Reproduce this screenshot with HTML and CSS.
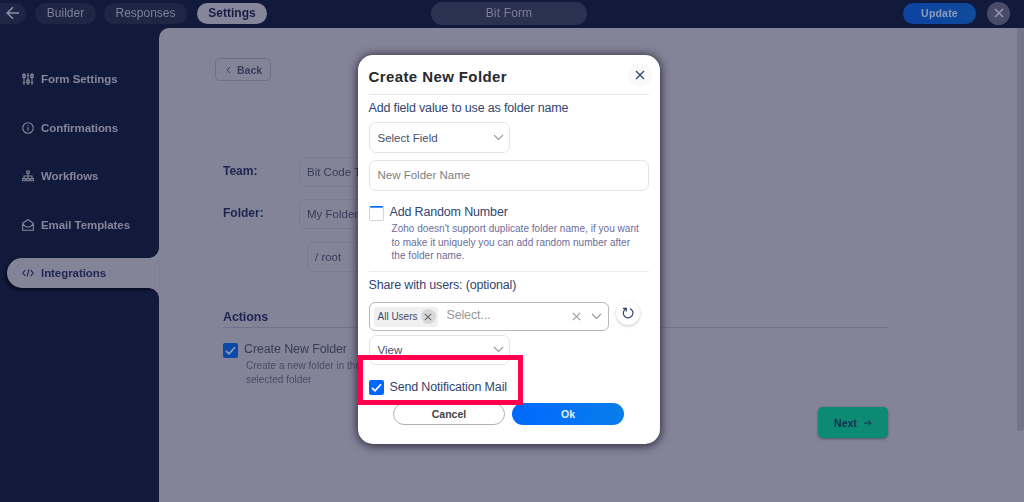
FILE: index.html
```html
<!DOCTYPE html>
<html lang="en">
<head>
<meta charset="utf-8">
<title>Bit Form</title>
<link rel="stylesheet" href="styles.css">
</head>
<body>
<div class="app">
  <header class="topbar">
    <div class="top-left">
      <span class="back-arrow"><svg width="14" height="14" viewBox="0 0 14 14"><path d="M13 7H1.5M7 1.2 1.2 7 7 12.8"/></svg></span>
      <span class="tab tab-builder">Builder</span>
      <span class="tab tab-responses">Responses</span>
      <span class="tab tab-settings">Settings</span>
    </div>
    <div class="form-name">Bit Form</div>
    <div class="top-right">
      <span class="update">Update</span>
      <span class="close-app"><svg width="10" height="10" viewBox="0 0 10 10"><path d="M1 1l8 8M9 1 1 9"/></svg></span>
    </div>
  </header>
  <div class="workspace">
    <nav class="sidebar">
      <a class="nav-item"><svg width="12" height="12" viewBox="0 0 12 12"><path d="M2 0v12M6 0v12M10 0v12"/><rect x=".8" y="1.5" width="2.4" height="3"/><rect x="4.8" y="7" width="2.4" height="3"/><rect x="8.8" y="1.5" width="2.4" height="3"/><path d="M.8 9.5h2.4M4.8 2.5h2.4M8.8 9.5h2.4"/></svg><span>Form Settings</span></a>
      <a class="nav-item"><svg width="12" height="12" viewBox="0 0 12 12"><circle cx="6" cy="6" r="5.3"/><path d="M6 5.3v3.5M6 3.2v1.1"/></svg><span>Confirmations</span></a>
      <a class="nav-item"><svg width="12" height="12" viewBox="0 0 12 12"><path d="M4.8 1h2.4v2.2H4.8zM6 3.2V8M2 8.5V6h8v2.5M.7 8.5h2.6v2.3H.7zM4.7 8.5h2.6v2.3H4.7zM8.7 8.5h2.6v2.3H8.7z"/></svg><span>Workflows</span></a>
      <a class="nav-item"><svg width="12" height="12" viewBox="0 0 12 12"><path d="M.6 4.3 6 .7l5.4 3.6v7H.6zM.8 5.2 4 8h4l3.2-2.8"/></svg><span>Email Templates</span></a>
      <a class="nav-item active"><svg width="12" height="12" viewBox="0 0 12 12"><path d="M3.2 3.2.8 6l2.4 2.8M8.8 3.2 11.2 6 8.8 8.8M7 2.5l-2 7"/></svg><span>Integrations</span></a>
    </nav>
    <main class="panel">
      <span class="back"><svg width="5" height="8" viewBox="0 0 5 8"><path d="M4 1 1.2 4 4 7"/></svg>Back</span>
      <div class="field team"><b>Team:</b><span class="box">Bit Code Team</span></div>
      <div class="field folder"><b>Folder:</b><span class="box">My Folders</span></div>
      <div class="box root">/ root</div>
      <div class="actions">Actions</div>
      <div class="action">
        <span class="check on dim"><svg width="11" height="9" viewBox="0 0 11 9"><path d="M1 4.8 4 7.8 10 1.2"/></svg></span>
        <div><div class="action-title">Create New Folder</div><div class="action-note">Create a new folder in the<br>selected folder</div></div>
      </div>
      <span class="next">Next <svg width="8" height="8" viewBox="0 0 8 8"><path d="M0 4h7M4.2 1 7.2 4l-3 3"/></svg></span>
    </main>
    <span class="scrollbar"></span>
  </div>
</div>

<section class="modal">
  <div class="modal-head"><h1>Create New Folder</h1><span class="modal-close"><svg width="10" height="10" viewBox="0 0 10 10"><path d="M1 1l8 8M9 1 1 9"/></svg></span></div>
  <div class="label add-field">Add field value to use as folder name</div>
  <div class="select"><span>Select Field</span><svg width="11" height="7" viewBox="0 0 11 7"><path d="M1 1l4.5 4.5L10 1"/></svg></div>
  <div class="input">New Folder Name</div>
  <div class="option random">
    <span class="check off"></span>
    <div><div class="label">Add Random Number</div><p class="note">Zoho doesn't support duplicate folder name, if you want<br>to make it uniquely you can add random number after<br>the folder name.</p></div>
  </div>
  <div class="label share">Share with users: (optional)</div>
  <div class="users">
    <div class="multi">
      <span class="chip"><span>All Users</span><i><svg width="8" height="8" viewBox="0 0 8 8"><path d="M.8.8l6.4 6.4M7.2.8.8 7.2"/></svg></i></span>
      <span class="ph">Select...</span>
      <svg class="clear" width="9" height="9" viewBox="0 0 9 9"><path d="M.8.8l7.4 7.4M8.2.8.8 8.2"/></svg>
      <svg width="11" height="7" viewBox="0 0 11 7"><path d="M1 1l4.5 4.5L10 1"/></svg>
    </div>
    <span class="refresh"><svg width="12" height="12" viewBox="0 0 12 12"><path d="M8 1.6A4.8 4.8 0 1 1 4 1.7M.9 1.400H4.300V4.600"/></svg></span>
  </div>
  <div class="select view"><span>View</span><svg width="11" height="7" viewBox="0 0 11 7"><path d="M1 1l4.500 4.500L10 1"/></svg></div>
  <div class="option mail">
    <span class="check on"><svg width="11" height="9" viewBox="0 0 11 9"><path d="M1 4.800 4 7.800 10 1.200"/></svg></span>
    <div class="label">Send Notification Mail</div>
  </div>
  <div class="buttons"><span class="btn cancel">Cancel</span><span class="btn ok">Ok</span></div>
</section>
<div class="highlight"></div>
</body>
</html>
```

FILE: styles.css
```css
* { box-sizing: border-box; }
body { margin: 0; width: 1024px; height: 502px; overflow: hidden; background: #121a3b; font-family: "Liberation Sans", Arial, sans-serif; }
svg { fill: none; stroke: currentColor; flex: none; }
span, a { white-space: nowrap; }

.app { width: 1024px; height: 502px; background: #121a3b; filter: blur(.6px); }
.topbar { height: 28px; display: grid; grid-template-columns: 431px 156px 1fr; align-items: center; padding-bottom: 2px; color: #7d8096; }
.top-left { display: flex; align-items: center; }
.back-arrow { width: 26px; height: 21px; padding-left: 6px; display: flex; align-items: center; background: #1e2645; border-radius: 0 11px 11px 0; color: #9090a5; }
.back-arrow svg { stroke-width: 1.5; }
.tab { height: 21px; line-height: 21px; border-radius: 11px; text-align: center; background: #1e2645; font-size: 12px; }
.tab-builder { width: 61px; margin-left: 9px; }
.tab-responses { width: 83px; margin-left: 8px; }
.tab-settings { width: 70px; margin-left: 10px; background: #86869b; color: #171c42; font-weight: 700; }
.form-name { height: 23px; line-height: 23px; border-radius: 12px; text-align: center; font-size: 12px; letter-spacing: .15px; background: #2a3151; }
.top-right { display: flex; justify-content: flex-end; align-items: center; padding-right: 14px; }
.update { width: 73px; height: 21px; line-height: 21px; border-radius: 11px; background: linear-gradient(100deg, #0d43a4, #104a99); color: #8e9bbd; text-align: center; font-size: 10.5px; font-weight: 700; letter-spacing: .2px; }
.close-app { width: 23px; height: 23px; margin-left: 11px; border-radius: 50%; background: #484c69; color: #9999ac; display: flex; align-items: center; justify-content: center; }
.close-app svg { stroke-width: 1.5; }

.workspace { height: 474px; display: flex; position: relative; }
.sidebar { width: 159px; padding-top: 36px; padding-left: 7px; display: flex; flex-direction: column; gap: 18.5px; }
.nav-item { height: 30px; padding-left: 15px; display: flex; align-items: center; gap: 7px; color: #85869b; font-size: 11.5px; font-weight: 700; letter-spacing: -.06px; }
.nav-item svg { stroke-width: 1.1; }
.nav-item.active { position: relative; color: #202853; background: #848499; border-radius: 15px 0 0 15px; box-shadow: -2px 2px 3px #080c23; }
.active::before, .active::after { content: ""; position: absolute; right: 0; width: 10px; height: 10px; }
.active::before { top: -10px; background: radial-gradient(circle at 0 0, #121a3b 9.5px, #848499 10px); }
.active::after { bottom: -10px; background: radial-gradient(circle at 0 100%, #121a3b 9.5px, #848499 10px); }
.panel { flex: 1; background: #848499; border-radius: 10px 0 0 0; padding: 30px 136px 0 64px; color: #383b59; font-size: 12px; display: flex; flex-direction: column; align-items: flex-start; }
.back { width: 56px; height: 23px; margin-left: -8px; border: 1px solid #6e6f85; border-radius: 5px; display: flex; align-items: center; padding-left: 10px; gap: 6px; font-size: 10.5px; font-weight: 700; }
.field { display: flex; align-items: center; height: 30px; }
.field b { width: 76px; margin-top: -2px; color: #1c2550; font-size: 12px; }
.box { width: 180px; height: 30px; line-height: 29px; padding-left: 7px; border: 1px solid #7a7b91; border-radius: 7px; font-size: 11.5px; }
.team { margin-top: 76px; }
.folder { margin-top: 12px; }
.root { margin-left: 84px; margin-top: 13px; width: 120px; }
.actions { align-self: stretch; height: 18px; margin-top: 38px; border-bottom: 1px solid #727389; color: #1c2550; font-weight: 700; line-height: 14px; font-size: 12.5px; letter-spacing: -.1px; }
.action { display: flex; margin-top: 13px; gap: 6px; }
.action > .check { margin-top: 2px; }
.action-title { line-height: 17px; font-size: 12.5px; letter-spacing: -.12px; }
.action-note { margin: 1px 0 0 2px; line-height: 13.5px; font-size: 10px; letter-spacing: .02px; color: #494969; }
.next { align-self: flex-end; width: 70px; height: 31px; margin-top: 21px; border-radius: 5px; background: #0d8a73; color: #102c50; box-shadow: 0 1px 3px #50536b; display: flex; align-items: center; justify-content: center; gap: 7px; font-size: 10.5px; font-weight: 700; }
.scrollbar { position: absolute; right: 0; top: 0; width: 7px; height: 403px; background: #74748a; border-radius: 0 0 3px 3px; }

.check { width: 15px; height: 15px; border-radius: 2px; flex: none; display: flex; align-items: center; justify-content: center; }
.check.on { background: #0068fd; color: #fff; }
.check.on svg { stroke-width: 1.7; }
.check.on.dim { background: #0b49a9; color: #8d9abb; }
.check.off { border: 1.5px solid #cfd5df; border-top: 1px solid #0068fd; box-shadow: inset 0 1px #5a9bfd; }

.modal { position: absolute; left: 357.5px; top: 55px; width: 302px; height: 389px; padding: 0 11px; background: #fff; border-radius: 15px; box-shadow: 0 1px 10px 1px rgba(20, 10, 30, .75); color: #32456f; }
.modal-head { height: 40px; border-bottom: 1px solid #e7e7e9; display: flex; justify-content: space-between; }
.modal h1 { margin: 0; font-size: 15px; line-height: 44px; color: #26292e; letter-spacing: .4px; }
.modal-close { width: 24px; height: 24px; margin: 8px -3px 0 0; border-radius: 50%; background: #f9f9fa; display: flex; align-items: center; justify-content: center; color: #2c4476; }
.modal-close svg { stroke-width: 1.3; }
.label { font-size: 12.5px; line-height: 16px; letter-spacing: -.16px; white-space: nowrap; }
.add-field { margin-top: 5px; }
.select { width: 141px; height: 31px; margin-top: 6px; padding: 0 5px 0 8px; border: 1px solid #e5e5e7; border-radius: 7px; display: flex; align-items: center; justify-content: space-between; font-size: 11.5px; color: #46516b; }
.select svg, .multi svg { color: #999; stroke-width: 1.1; }
.input { height: 31px; margin-top: 7px; padding-left: 8px; border: 1px solid #e5e5e7; border-radius: 7px; font-size: 11.5px; line-height: 28px; color: #7c7f84; }
.option { display: flex; gap: 6px; }
.random { height: 66px; margin-top: 14px; }
.random .check { margin-top: 1px; }
.random .label { line-height: 15px; }
.note { margin: 2px 0 0 2px; font-size: 10px; letter-spacing: .035px; line-height: 13.7px; color: #6c6c99; }
.share { border-top: 1px solid #ececee; padding-top: 5px; height: 31px; }
.users { display: flex; gap: 7px; }
.multi { width: 240px; height: 29px; border: 1px solid #b8b8bb; border-radius: 6px; padding: 0 6px 0 4px; display: flex; align-items: center; }
.chip { width: 64px; height: 20px; background: #f0f0f1; border-radius: 4px; display: flex; align-items: center; justify-content: space-between; padding-left: 4px; font-size: 10px; color: #3c4a69; }
.chip i { width: 15px; height: 15px; margin-right: 2px; border-radius: 50%; background: #d8d8da; display: flex; align-items: center; justify-content: center; }
.chip svg { color: #666; }
.ph { margin-left: 9px; padding-bottom: 3px; font-size: 12.5px; letter-spacing: -.15px; color: #999; }
.clear { margin-left: auto; margin-right: 10px; }
.refresh { width: 24px; height: 24px; margin-top: -1px; border-radius: 50%; box-shadow: 0 1px 3px #c5c5cb; color: #2e4470; display: flex; align-items: center; justify-content: center; }
.refresh svg { stroke-width: 1.2; }
.view { margin-top: 4px; height: 30px; padding-bottom: 1px; }
.mail { margin-top: 15px; height: 24px; }
.mail .label { line-height: 14px; }
.buttons { display: flex; justify-content: center; gap: 7px; margin-top: -1px; }
.btn { width: 112px; height: 22px; line-height: 20px; border-radius: 11px; text-align: center; font-size: 10.5px; font-weight: 700; }
.cancel { border: 1px solid #b2b2b5; color: #444; }
.ok { background: linear-gradient(100deg, #0068ff, #087eea); color: #e9f3ff; line-height: 22px; }
.highlight { position: absolute; left: 358px; top: 355px; width: 165px; height: 50px; border: 5px solid #ff004f; }
```
